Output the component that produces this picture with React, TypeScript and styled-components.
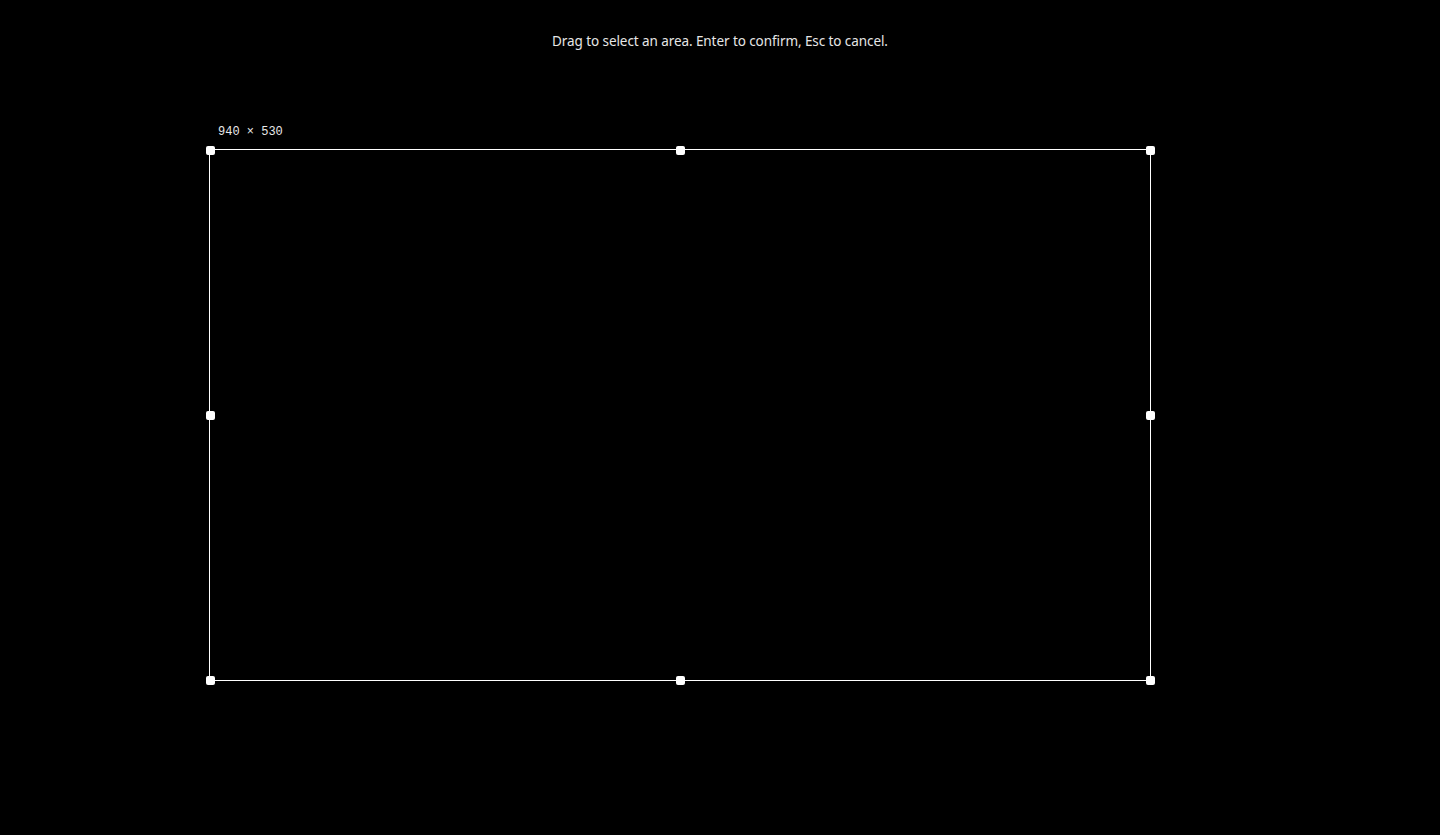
import React from 'react'
import styled, { createGlobalStyle } from 'styled-components'

type Rect = {
  x: number
  y: number
  w: number
  h: number
}

// selection area in page pixels
const selection: Rect = { x: 210, y: 150, w: 940, h: 530 }

const handles = [
  { left: '0%', top: '0%' },
  { left: '50%', top: '0%' },
  { left: '100%', top: '0%' },
  { left: '0%', top: '50%' },
  { left: '100%', top: '50%' },
  { left: '0%', top: '100%' },
  { left: '50%', top: '100%' },
  { left: '100%', top: '100%' },
]

function App() {
  const { x, y, w, h } = selection

  return (
    <>
      <GlobalStyle />
      <Overlay>
        <Hint>Drag to select an area. Enter to confirm, Esc to cancel.</Hint>
        <Selection style={{ left: x - 1, top: y - 1, width: w + 2, height: h + 2 }}>
          <SizeLabel>
            {w} × {h}
          </SizeLabel>
          {handles.map((p, i) => (
            <Handle key={i} $left={p.left} $top={p.top} />
          ))}
        </Selection>
      </Overlay>
    </>
  )
}

export default App

const GlobalStyle = createGlobalStyle`
  html, body {
    margin: 0;
    padding: 0;
    background: #000;
  }
`
const Overlay = styled.div`
  position: relative;
  width: 1440px;
  height: 835px;
  background: #000;
  overflow: hidden;
  cursor: crosshair;
`
const Hint = styled.div`
  padding-top: 32px;
  text-align: center;
  color: #e6e6e6;
  font-family: 'Noto Sans', 'Open Sans', sans-serif;
  font-size: 13.5px;
  line-height: 18px;
  letter-spacing: -0.08px;
`
const Selection = styled.div`
  position: absolute;
  box-sizing: border-box;
  border: 1px solid #fff;
`
const SizeLabel = styled.div`
  position: absolute;
  left: 8px;
  bottom: calc(100% + 11px);
  color: #e8e8e8;
  font-family: 'Liberation Mono', 'DejaVu Sans Mono', monospace;
  font-size: 12px;
  line-height: 14px;
  white-space: nowrap;
`
const Handle = styled.div<{ $left: string; $top: string }>`
  position: absolute;
  left: calc(${(p) => p.$left} - 4px);
  top: calc(${(p) => p.$top} - 4px);
  width: 9px;
  height: 9px;
  background: #fff;
  border-radius: 2px;
`
